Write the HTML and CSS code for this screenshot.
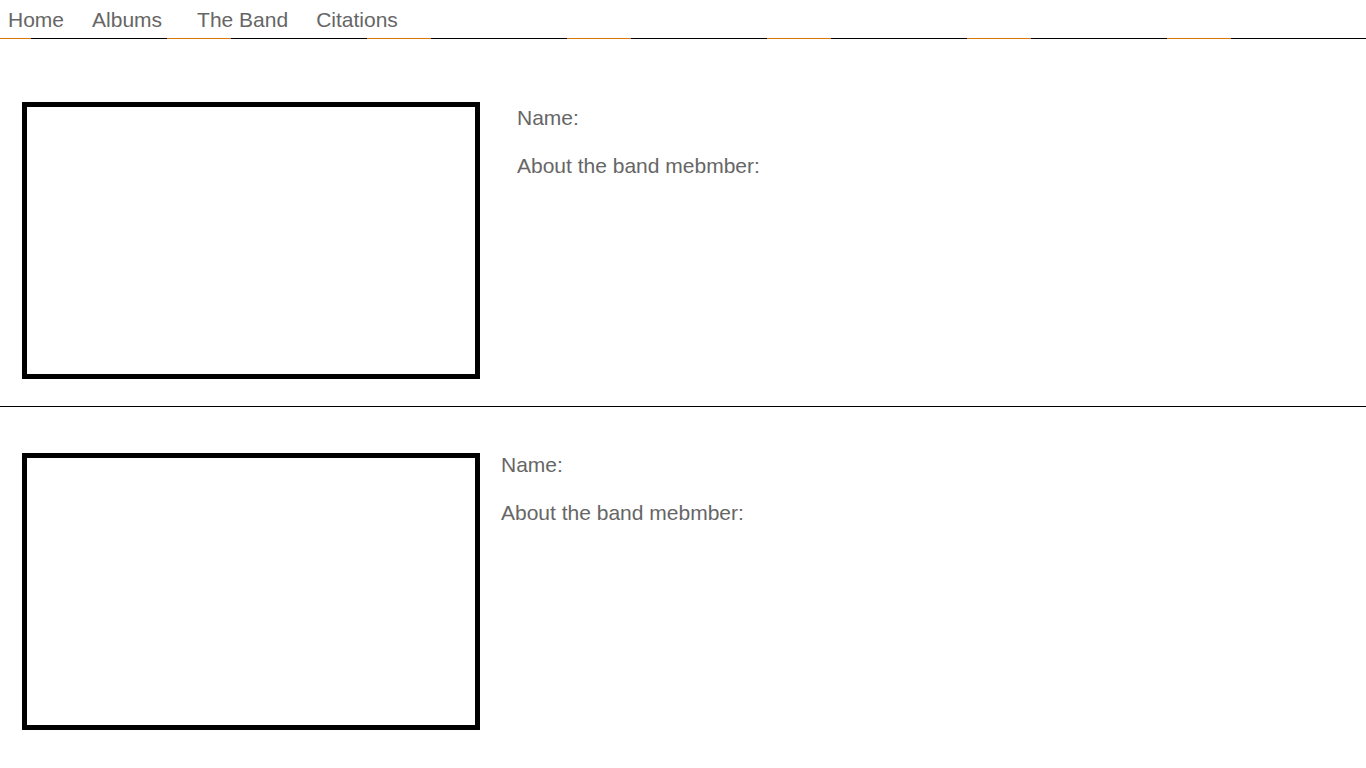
FILE: index.html
```html
<!DOCTYPE html>
<html lang="en">
<head>
  <meta charset="UTF-8">
  <title>The Band</title>
  <link rel="stylesheet" href="styles.css">
</head>
<body>
  <nav class="topnav">
    <a href="#" class="nav-link">Home</a>
    <a href="#" class="nav-link">Albums</a>
    <a href="#" class="nav-link band-link">The Band</a>
    <a href="#" class="nav-link">Citations</a>
  </nav>
  <div class="nav-rule"></div>

  <section class="member first">
    <div class="photo"></div>
    <div class="info">
      <p>Name:</p>
      <p>About the band mebmber:</p>
    </div>
  </section>

  <hr class="divider">

  <section class="member second">
    <div class="photo"></div>
    <div class="info">
      <p>Name:</p>
      <p>About the band mebmber:</p>
    </div>
  </section>
</body>
</html>
```

FILE: styles.css
```css
body { margin: 0; font-family: "Liberation Sans", Arial, sans-serif; background: #fff; color: #666; }
.topnav { display: flex; gap: 28px; height: 38px; padding: 8px 0 0 8px; box-sizing: border-box; }
.nav-link { font-size: 21px; line-height: 24px; color: #666; text-decoration: none; }
.band-link { margin-left: 7px; }
.nav-rule { height: 1px; background: repeating-linear-gradient(to right, #d9770a 0 64px, #000 64px 200px); background-size: 200px 1px; background-position: 167px 0; }
.member { display: flex; align-items: flex-start; padding-left: 22px; }
.member.first { padding-top: 63px; padding-bottom: 27px; }
.member.second { padding-top: 46px; }
.photo { width: 448px; height: 267px; border: 5px solid #000; flex-shrink: 0; }
.info { font-size: 21px; line-height: 28px; }
.info p { margin: 0 0 20px; }
.first .info { margin-left: 37px; padding-top: 2px; }
.second .info { margin-left: 21px; margin-top: -2px; }
.divider { margin: 0; border: none; border-top: 1px solid #000; }
```
